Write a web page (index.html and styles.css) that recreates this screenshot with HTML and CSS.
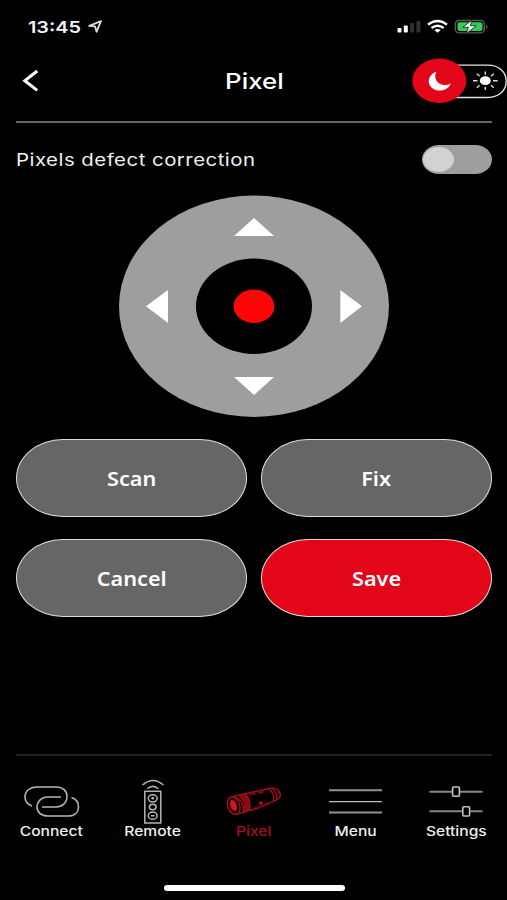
FILE: index.html
```html
<!DOCTYPE html>
<html lang="en">
<head>
  <meta charset="utf-8">
  <meta name="viewport" content="width=device-width, initial-scale=1">
  <title>Pixel</title>
  <link rel="stylesheet" href="styles.css">
</head>
<body>
  <div class="screen">

    <div class="status">
      <div class="status-left">
        <span class="wide time">13:45</span>
        <svg width="15" height="14" viewBox="0 0 15 14">
          <path d="M1.2 5.8 L13 1.2 L8.6 11.7 L7 6.3 Z" fill="none" stroke="#ddd" stroke-width="1.8" stroke-linejoin="round"/>
        </svg>
      </div>
      <svg class="status-right" width="92" height="16" viewBox="0 0 92 16">
        <!-- signal -->
        <rect x="0.5" y="9" width="4" height="4.5" rx="1" fill="#fff"/>
        <rect x="6.8" y="6.5" width="4" height="7" rx="1" fill="#fff"/>
        <rect x="13.1" y="4" width="4" height="9.5" rx="1" fill="#303030"/>
        <rect x="19.4" y="2" width="4" height="11.5" rx="1" fill="#303030"/>
        <!-- wifi -->
        <g fill="none" stroke="#fff" stroke-width="2.4">
          <path d="M31 5.6 Q40.5 -1.8 50 5.6"/>
          <path d="M34.5 9 Q40.5 4.4 46.7 9"/>
        </g>
        <path d="M37.3 11 Q40.5 8.8 43.8 11 L40.5 13.8 Z" fill="#fff"/>
        <!-- battery -->
        <rect x="58.3" y="1.5" width="29" height="12.4" rx="3.8" fill="none" stroke="#5c5c5c" stroke-width="1.4"/>
        <rect x="60.5" y="3.3" width="25" height="8.8" rx="2" fill="#35cb5b"/>
        <path d="M89 5.4 Q92 7.6 89 10 Z" fill="#5c5c5c"/>
        <path d="M75 1 L65.8 8.3 H71.5 L69.3 14.6 L79.2 6.8 H73.3 Z" fill="#fff" stroke="#0c1c10" stroke-width=".8"/>
      </svg>
    </div>

    <div class="header">
      <svg class="back" width="18" height="24" viewBox="0 0 18 24">
        <path d="M16.2 2 L3.8 11.7 L16.2 21.4" fill="none" stroke="#fff" stroke-width="3"/>
      </svg>
      <span class="wide title">Pixel</span>
      <svg class="theme" width="95" height="46" viewBox="0 0 95 46">
        <path d="M40 7.2 H76 C87 7.2 94.2 14 94.2 23.2 C94.2 32.5 87 39.5 76 39.5 H40" fill="none" stroke="#e4e4e4" stroke-width="1.3"/>
        <ellipse cx="27.3" cy="22.7" rx="27" ry="22.2" fill="#e30619"/>
        <path d="M24.5 13.5 C15 17 14.5 27 21.5 31 C28 34.3 36.5 32 38.8 25.5 C33 28.5 26.5 26.7 24.3 22.5 C22.7 19.2 23 16 24.5 13.5 Z" fill="#fff"/>
        <ellipse cx="73.3" cy="22.7" rx="5.5" ry="4.4" fill="#fff"/>
        <path d="M73.3 13.5 V16.8 M73.3 28.8 V32 M61 22.7 H65.5 M81 22.7 H85.7 M64.8 15.8 L67.6 18.2 M79 27.3 L81.8 29.7 M81.8 15.8 L79 18.2 M67.6 27.3 L64.8 29.7" stroke="#ddd" stroke-width="1.4"/>
      </svg>
    </div>

    <div class="row">
      <span class="wide label">Pixels defect correction</span>
      <div class="toggle"><div class="knob"></div></div>
    </div>

    <div class="pad">
      <svg width="270" height="222" viewBox="0 0 270 222">
        <ellipse cx="135" cy="111.3" rx="135" ry="110.7" fill="#9e9e9e"/>
        <ellipse cx="135" cy="111.3" rx="58" ry="47.7" fill="#000"/>
        <ellipse cx="135" cy="111.3" rx="20.4" ry="16.7" fill="#ff0505"/>
        <g fill="#fff">
          <path d="M135 23 L155 41 H115 Z"/>
          <path d="M135 200 L155 182 H115 Z"/>
          <path d="M27 111.3 L49 95 V128 Z"/>
          <path d="M243 111.3 L221.3 95 V128 Z"/>
        </g>
      </svg>
    </div>

    <div class="buttons">
      <div class="btn"><span class="wide">Scan</span></div>
      <div class="btn"><span class="wide">Fix</span></div>
      <div class="btn"><span class="wide">Cancel</span></div>
      <div class="btn save"><span class="wide">Save</span></div>
    </div>

    <div class="nav">
      <div class="item">
        <svg width="60" height="46" viewBox="0 0 60 46">
          <g fill="none" stroke="#b5b5b5" stroke-width="1.6">
            <path d="M11 27 C6 25 4 21 4 18 C4 12 9 8 16 8 H35 C42 8 46 12 46 17.5 C46 24 41 28 35 28 H21"/>
            <path d="M40 18 H27 C20 18 16 23 16 28 C16 33 20 37 27 37 H47 C54 37 57.5 33 57.5 28 C57.5 23 55 20 50.5 18.5"/>
          </g>
        </svg>
        <span class="wide">Connect</span>
      </div>
      <div class="item">
        <svg width="60" height="46" viewBox="0 0 60 46">
          <g fill="none" stroke="#b5b5b5" stroke-width="1.5">
            <path d="M20.5 6 Q31 -3 41.5 6"/>
            <path d="M25.3 9.8 Q31 5 36.5 9.8"/>
            <rect x="22.8" y="12.3" width="16" height="31.7"/>
            <ellipse cx="30.7" cy="19.3" rx="4.4" ry="3.6"/>
            <ellipse cx="30.7" cy="28" rx="3.4" ry="2.7"/>
            <ellipse cx="30.7" cy="36.7" rx="4.4" ry="3.6"/>
            <path d="M29.2 19.3 H32.2 M30.7 18 V20.6 M28.9 36.7 H32.5"/>
          </g>
        </svg>
        <span class="wide">Remote</span>
      </div>
      <div class="item active">
        <svg width="60" height="46" viewBox="0 0 60 46">
          <path d="M15.5 16.5 L22.5 14.7 Q28 22 26.5 31.7 L20 33.5 Q23 24 15.5 16.5 Z" fill="#8a0a16"/>
          <g fill="none" stroke="#a80c1a" stroke-width="1.4">
            <path d="M7 18.3 L21.5 14.8 L48 9.3 C53 8.3 57 11.5 57.3 16 C57.3 18.5 56 20 53 21.2 L36.5 28.7 L13.5 35.3"/>
            <ellipse cx="10.7" cy="26.7" rx="6" ry="9" transform="rotate(-20 10.7 26.7)"/>
            <path d="M7 18.3 C14 16 22 24 20 33.3 M22.5 14.7 Q28.5 22 26.5 31.5 M46 10 Q52 15 50.5 22 M49 9.3 Q55 14 53.5 21"/>
          </g>
          <path d="M27 15.5 L43 12.3" stroke="#7d0a14" stroke-width="1.8" stroke-dasharray="6 2"/>
          <path d="M29 29.5 L45 23.5" stroke="#6d0811"/>
          <ellipse cx="10.5" cy="26.4" rx="3.1" ry="5.7" transform="rotate(-20 10.5 26.4)" fill="#df1022"/>
          <circle cx="37.8" cy="24" r="1.7" fill="#c80e1e"/>
        </svg>
        <span class="wide">Pixel</span>
      </div>
      <div class="item">
        <svg width="60" height="46" viewBox="0 0 60 46">
          <path d="M4 11.3 H57 M4 33.4 H57" stroke="#929292" stroke-width="2"/>
          <path d="M4 22.6 H57" stroke="#bdbdbd" stroke-width="1.4"/>
        </svg>
        <span class="wide">Menu</span>
      </div>
      <div class="item">
        <svg width="60" height="46" viewBox="0 0 60 46">
          <path d="M3.5 12.7 H26 M34 12.7 H56.5 M3.5 32.3 H36 M44.5 32.3 H56.5" stroke="#858585" stroke-width="2"/>
          <g fill="none" stroke="#c4c4c4" stroke-width="1.6">
            <rect x="26.6" y="8" width="6.8" height="9.2" rx="1"/>
            <rect x="36.8" y="27.8" width="6.8" height="9.2" rx="1"/>
          </g>
        </svg>
        <span class="wide">Settings</span>
      </div>
    </div>

    <div class="home"></div>
  </div>
</body>
</html>
```

FILE: styles.css
```css
* { box-sizing: border-box; }
body {
  margin: 0;
  background: #000;
  color: #fff;
  font-family: Inter, "Liberation Sans", sans-serif;
}
svg { display: block; flex: none; }
.screen {
  width: 507px;
  height: 900px;
  display: flex;
  flex-direction: column;
  overflow: hidden;
}
/* stretched lettering */
.wide {
  display: inline-block;
  white-space: nowrap;
  transform: scaleX(1.2);
}

.status {
  height: 53px;
  padding: 0 18px 0 28px;
  display: flex;
  justify-content: space-between;
  align-items: center;
}
.status-left {
  display: flex;
  align-items: center;
  gap: 16px;
}
.time {
  font-size: 16.5px;
  font-weight: 600;
  transform-origin: left;
  color: #f4f4f4;
}

.header {
  height: 70px;
  margin: 0 0 0 16px;
  padding: 0 0 15px 5px;
  display: grid;
  grid-template-columns: 95px 1fr 95px;
  align-items: center;
}
.title {
  font-size: 21.5px;
  font-weight: 500;
  justify-self: center;
  margin: 0 20px 0 0;
}
.theme { justify-self: end; }

.row {
  height: 74px;
  margin: -2px 15px 0 16px;
  border-top: 2px solid #666;
  display: flex;
  justify-content: space-between;
  align-items: center;
}
.label {
  padding-top: 1px;
  font-size: 17px;
  letter-spacing: 0.4px;
  transform-origin: left;
  color: #f0f0f0;
}
.toggle {
  width: 70px;
  height: 29px;
  padding: 2px 1px;
  background: #9e9e9e;
  border-radius: 17px / 14.5px;
}
.knob {
  width: 31px;
  height: 25px;
  background: #d2d2d2;
  border-radius: 50%;
}

.pad {
  height: 222px;
  display: flex;
  justify-content: center;
}

.buttons {
  margin: 22px 15px 0 16px;
  display: grid;
  grid-template-columns: 1fr 1fr;
  gap: 22px 14px;
}
.btn {
  height: 78px;
  padding-top: 2px;
  display: flex;
  justify-content: center;
  align-items: center;
  background: #666;
  border: 1px solid #ddd;
  border-radius: 47px / 39px;
  font-family: "Noto Sans", sans-serif;
  font-size: 19px;
  font-weight: 600;
}
.btn .wide { transform: scaleX(1.14); }
.save { background: #e30619; }

.nav {
  margin-top: auto;
  height: 130px;
  padding-top: 25px;
  display: grid;
  grid-template-columns: repeat(5, 1fr);
  background: linear-gradient(#242424, #242424) 16px 0 / 476px 2px no-repeat;
}
.item {
  display: flex;
  flex-direction: column;
  align-items: center;
  font-size: 13px;
  font-weight: 500;
  line-height: 13px;
  color: #f0f0f0;
}
.item .wide { margin-left: 1px; }
.item.active { color: #a80d1b; }

.home {
  width: 181px;
  height: 6px;
  margin: 1px 0 9px 164px;
  background: #fff;
  border-radius: 3px;
}
```
